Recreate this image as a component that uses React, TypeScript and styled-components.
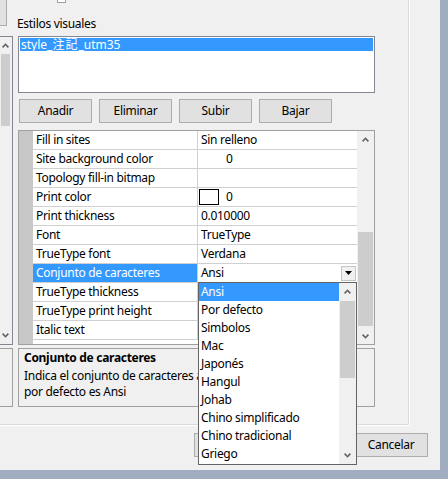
import React from 'react'
import styled, { createGlobalStyle } from 'styled-components'

type PropRow = {
  name: string
  value?: string
  swatch?: 'box' | 'space'
  selected?: boolean
}

const rows: PropRow[] = [
  { name: 'Fill in sites', value: 'Sin relleno' },
  { name: 'Site background color', value: '0', swatch: 'space' },
  { name: 'Topology fill-in bitmap' },
  { name: 'Print color', value: '0', swatch: 'box' },
  { name: 'Print thickness', value: '0.010000' },
  { name: 'Font', value: 'TrueType' },
  { name: 'TrueType font', value: 'Verdana' },
  { name: 'Conjunto de caracteres', value: 'Ansi', selected: true },
  { name: 'TrueType thickness' },
  { name: 'TrueType print height' },
  { name: 'Italic text' },
]

const charsets = [
  'Ansi',
  'Por defecto',
  'Simbolos',
  'Mac',
  'Japonés',
  'Hangul',
  'Johab',
  'Chino simplificado',
  'Chino tradicional',
  'Griego',
]

const GlobalStyle = createGlobalStyle`
  html, body {
    margin: 0;
    padding: 0;
    background: #f0f0f0;
  }
  body {
    font-family: "Noto Sans", "Noto Sans CJK JP", sans-serif;
    font-size: 12px;
    letter-spacing: -0.3px;
    color: #000;
  }
`

const Chevron: React.FC<{ down?: boolean; color?: string }> = ({ down, color = '#606060' }) => (
  <svg width="7" height="5" viewBox="0 0 7 5" style={{ transform: down ? 'rotate(180deg)' : undefined }}>
    <path d="M0.6 4.4 L3.5 1.3 L6.4 4.4" fill="none" stroke={color} strokeWidth="1.6" />
  </svg>
)

const ScrollBar: React.FC<{ width: number; thumbTop: number; thumbHeight: number; arrow?: number }> = ({
  width,
  thumbTop,
  thumbHeight,
  arrow = 17,
}) => (
  <Bar $width={width}>
    <ArrowBox $h={arrow}>
      <Chevron />
    </ArrowBox>
    <Track>
      <Thumb $top={thumbTop} $height={thumbHeight} />
    </Track>
    <ArrowBox $h={arrow}>
      <Chevron down />
    </ArrowBox>
  </Bar>
)

export default function App() {
  return (
    <>
      <GlobalStyle />
      <Window>
        <Client>
          <TabPage>
            <LeftColumn>
              <TopStub />
              <SideList>
                <ScrollBar width={11} thumbTop={0} thumbHeight={72} />
              </SideList>
              <SideBox />
            </LeftColumn>
            <MainColumn>
              <CheckStub />
              <Label>Estilos visuales</Label>
              <ListBox>
                <ListItem>
                  style_<Cjk>注記</Cjk>_utm35
                </ListItem>
              </ListBox>
              <ButtonRow>
                <Button>Anadir</Button>
                <Button>Eliminar</Button>
                <Button>Subir</Button>
                <Button>Bajar</Button>
              </ButtonRow>
              <GridFrame>
                <Gutter />
                <RowList>
                  {rows.map((r) => (
                    <Row key={r.name}>
                      <NameCell $selected={r.selected}>{r.name}</NameCell>
                      <ValueCell>
                        {r.swatch === 'box' && <Swatch />}
                        {r.swatch === 'space' && <Swatch $empty />}
                        <span>{r.value}</span>
                        {r.selected && (
                          <>
                            <DropButton>
                              <svg width="7" height="4" viewBox="0 0 7 4">
                                <polygon points="0,0 7,0 3.5,4" fill="#000" />
                              </svg>
                            </DropButton>
                            <DropList>
                              <DropItems>
                                {charsets.map((c, i) => (
                                  <DropItem key={c} $active={i === 0}>
                                    {c}
                                  </DropItem>
                                ))}
                              </DropItems>
                              <ScrollBar width={17} thumbTop={1} thumbHeight={77} />
                            </DropList>
                          </>
                        )}
                      </ValueCell>
                    </Row>
                  ))}
                </RowList>
                <ScrollBar width={17} thumbTop={85} thumbHeight={94} arrow={16} />
              </GridFrame>
              <DescBox>
                <DescTitle>Conjunto de caracteres</DescTitle>
                <DescText>
                  Indica el conjunto de caracteres a
                  <br />
                  por defecto es Ansi
                </DescText>
              </DescBox>
            </MainColumn>
          </TabPage>
          <DialogButtons>
            <Button $wide />
            <Button $wide />
            <Button $wide>Cancelar</Button>
          </DialogButtons>
        </Client>
        <FrameRight />
        <FrameBottom />
      </Window>
    </>
  )
}

const Window = styled.div`
  width: 448px;
  height: 479px;
  display: grid;
  grid-template-columns: 440px 8px;
  grid-template-rows: 470px 9px;
  background: #f0f0f0;
  overflow: hidden;
`
const Client = styled.div`
  display: flex;
  flex-direction: column;
`
const FrameRight = styled.div`
  grid-column: 2;
  grid-row: 1 / span 2;
  background: #a0adc1;
`
const FrameBottom = styled.div`
  grid-column: 1;
  grid-row: 2;
  background: #a0adc1;
`
const TabPage = styled.div`
  width: 410px;
  height: 426px;
  flex-shrink: 0;
  box-sizing: border-box;
  box-shadow: inset -1px -1px #ffffff, inset -2px -2px #d9d9d9;
  display: flex;
  gap: 5px;
`
const LeftColumn = styled.div`
  width: 13px;
  display: flex;
  flex-direction: column;
`
const TopStub = styled.div`
  width: 7px;
  height: 26px;
  box-sizing: border-box;
  background: #e1e1e1;
  border-right: 1px solid #adadad;
  border-bottom: 1px solid #adadad;
`
const SideList = styled.div`
  margin-top: 10px;
  height: 309px;
  box-sizing: border-box;
  border: 1px solid #828790;
  border-left: none;
  display: flex;
`
const SideBox = styled.div`
  margin-top: 3px;
  height: 59px;
  box-sizing: border-box;
  border: 1px solid #a0a0a0;
  border-left: none;
`
const MainColumn = styled.div`
  width: 357px;
  display: flex;
  flex-direction: column;
`
const CheckStub = styled.div`
  margin-left: 39px;
  width: 9px;
  height: 3px;
  box-sizing: border-box;
  border: 1px solid #a0a0a0;
  border-top: none;
  background: #fff;
`
const Label = styled.div`
  margin: 13px 0 0 -1px;
  line-height: 15px;
`
const ListBox = styled.div`
  margin-top: 5px;
  height: 57px;
  box-sizing: border-box;
  border: 1px solid #828790;
  background: #fff;
  padding: 1px;
`
const ListItem = styled.div`
  height: 13px;
  line-height: 11px;
  background: #3399ff;
  color: #fff;
  padding-left: 1px;
  white-space: nowrap;
  letter-spacing: 0;
`
const Cjk = styled.span`
  font-family: "Noto Sans CJK JP", sans-serif;
  letter-spacing: 1px;
`
const ButtonRow = styled.div`
  margin-top: 6px;
  padding-left: 1px;
  display: flex;
  gap: 7px;
`
const Button = styled.div<{ $wide?: boolean }>`
  width: ${({ $wide }) => ($wide ? 74 : 73)}px;
  height: 24px;
  box-sizing: border-box;
  border: 1px solid #adadad;
  background: #e1e1e1;
  line-height: 22px;
  text-align: center;
  white-space: nowrap;
`
const GridFrame = styled.div`
  margin-top: 7px;
  height: 215px;
  box-sizing: border-box;
  border: 1px solid #a0a0a0;
  background: #fff;
  display: grid;
  grid-template-columns: 14px 324px 17px;
`
const Gutter = styled.div`
  background: #c8c8c8;
`
const RowList = styled.div`
  display: flex;
  flex-direction: column;
`
const Row = styled.div`
  height: 19px;
  box-sizing: border-box;
  border-bottom: 1px solid #d0d0d0;
  display: grid;
  grid-template-columns: 165px 159px;
`
const NameCell = styled.div<{ $selected?: boolean }>`
  border-right: 1px solid #d0d0d0;
  padding-left: 3px;
  line-height: 18px;
  white-space: nowrap;
  background: ${({ $selected }) => ($selected ? '#3399ff' : 'transparent')};
  color: ${({ $selected }) => ($selected ? '#fff' : '#000')};
`
const ValueCell = styled.div`
  position: relative;
  padding-left: 3px;
  line-height: 18px;
  display: flex;
  align-items: center;
  white-space: nowrap;
`
const Swatch = styled.div<{ $empty?: boolean }>`
  width: 20px;
  height: 16px;
  box-sizing: border-box;
  margin-left: -2px;
  margin-right: 7px;
  border: ${({ $empty }) => ($empty ? 'none' : '1px solid #000')};
  background: #fff;
  flex-shrink: 0;
`
const DropButton = styled.div`
  margin-left: auto;
  margin-right: 1px;
  width: 15px;
  height: 15px;
  box-sizing: border-box;
  border: 1px solid #c4c4c4;
  background: #f0f0f0;
  display: flex;
  align-items: center;
  justify-content: center;
`
const DropList = styled.div`
  position: absolute;
  z-index: 10;
  top: 18px;
  left: 0;
  width: 159px;
  height: 183px;
  box-sizing: border-box;
  border: 1px solid #646464;
  background: #fff;
  display: grid;
  grid-template-columns: 1fr 17px;
`
const DropItems = styled.div`
  display: flex;
  flex-direction: column;
`
const DropItem = styled.div<{ $active?: boolean }>`
  height: 18px;
  line-height: 18px;
  padding-left: 2px;
  background: ${({ $active }) => ($active ? '#3399ff' : 'transparent')};
  color: ${({ $active }) => ($active ? '#fff' : '#000')};
`
const Bar = styled.div<{ $width: number }>`
  width: ${({ $width }) => $width}px;
  display: flex;
  flex-direction: column;
  background: #f0f0f0;
`
const ArrowBox = styled.div<{ $h: number }>`
  height: ${({ $h }) => $h}px;
  flex-shrink: 0;
  display: flex;
  align-items: center;
  justify-content: center;
`
const Track = styled.div`
  flex: 1;
  display: flex;
  flex-direction: column;
  align-items: center;
`
const Thumb = styled.div<{ $top: number; $height: number }>`
  margin-top: ${({ $top }) => $top}px;
  height: ${({ $height }) => $height}px;
  width: calc(100% - 2px);
  background: #cdcdcd;
`
const DescBox = styled.div`
  margin-top: 3px;
  height: 59px;
  box-sizing: border-box;
  border: 1px solid #a0a0a0;
  padding: 1px 5px 0;
`
const DescTitle = styled.div`
  font-weight: bold;
  line-height: 16px;
`
const DescText = styled.div`
  margin-top: 2px;
  line-height: 16px;
  white-space: nowrap;
`
const DialogButtons = styled.div`
  padding: 7px 12px 0 0;
  display: flex;
  justify-content: flex-end;
  gap: 6px;
`
